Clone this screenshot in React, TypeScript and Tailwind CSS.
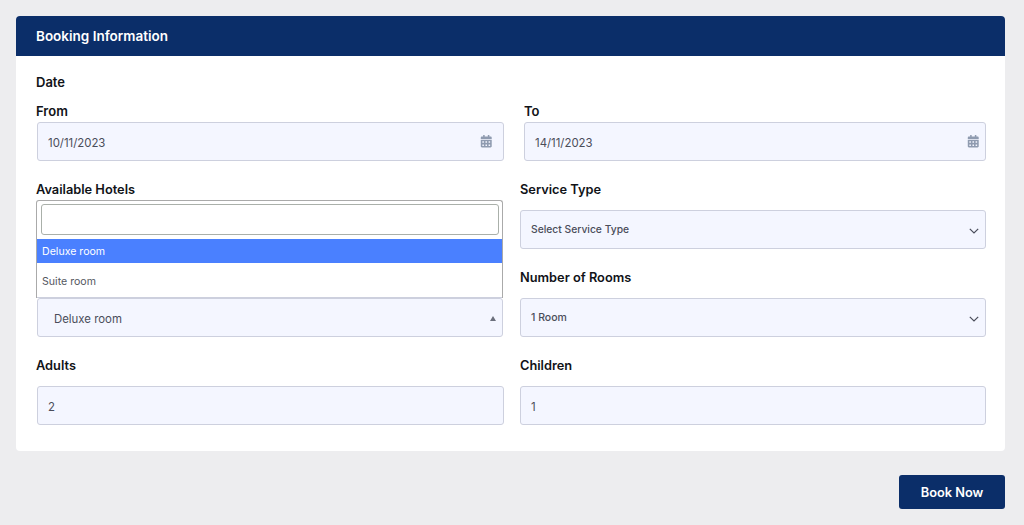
import { FaCalendarAlt } from "react-icons/fa";

function FieldLabel({ children, className = "" }: { children: React.ReactNode; className?: string }) {
  return (
    <label className={`block h-[21px] leading-[23px] font-semibold text-[#111318] ${className}`}>
      {children}
    </label>
  );
}

function Box({ children, className = "" }: { children: React.ReactNode; className?: string }) {
  return (
    <div className={`flex h-[39px] items-center justify-between rounded-[3px] border border-[#cdd0de] bg-[#f4f6ff] pr-[6px] pl-[10px] text-[#4a4d5a] ${className}`}>
      {children}
    </div>
  );
}

function Chevron() {
  return (
    <svg width="10" height="6" viewBox="0 0 10 6" fill="none" stroke="#4a4d5a" strokeWidth="1.2" className="mt-[2px]">
      <path d="M0.8 0.8 5 5 9.2 0.8" />
    </svg>
  );
}

function DateField({ label, value, className, boxClass }: { label: string; value: string; className: string; boxClass: string }) {
  return (
    <div className={className}>
      <FieldLabel className="text-[13px]">{label}</FieldLabel>
      <Box className={`mt-px text-[11.4px] ${boxClass}`}>
        <span className="pt-[4px]">{value}</span>
        <FaCalendarAlt className="text-[12.5px] text-[#8f9bb0]" />
      </Box>
    </div>
  );
}

export default function App() {
  return (
    <div className="h-[525px] w-[1024px] overflow-hidden bg-[#ededef] p-[16px] pr-[19px] font-['Inter',sans-serif]">
      <div className="rounded-[4px] bg-white">
        <div className="flex h-[40px] items-center rounded-t-[4px] bg-[#0b2e69] px-[20px] text-[13.5px] font-semibold text-white">
          Booking Information
        </div>
        <div className="pt-[15px] pr-[19px] pb-[26px] pl-[20px]">
          <FieldLabel className="mb-[8px] text-[13px]">Date</FieldLabel>
          <div className="flex">
            <DateField label="From" value="10/11/2023" className="w-[468px]" boxClass="ml-px pr-[11px]" />
            <DateField label="To" value="14/11/2023" className="ml-[20px] w-[462px]" boxClass="" />
          </div>

          <div className="mt-[17px] grid grid-cols-[468px_466px] gap-x-[16px] gap-y-[17px] text-[12.8px]">
            <div>
              <FieldLabel className="mb-[11px]">Available Hotels</FieldLabel>
              <div className="h-[39px]" />
            </div>
            <div>
              <FieldLabel className="mb-[11px]">Service Type</FieldLabel>
              <Box className="text-[10.5px]">
                <span className="text-[10.3px] font-medium">Select Service Type</span>
                <Chevron />
              </Box>
            </div>

            <div className="relative">
              <div className="h-[32px]" />
              <div className="relative">
                <Box className="mr-px ml-px text-[11.4px]">
                  <span className="pt-[4px] pl-[6px]">Deluxe room</span>
                  <span className="mt-[2px] h-0 w-0 border-x-[3.5px] border-b-[5px] border-x-transparent border-b-[#6b6f7c]" />
                </Box>
                <div className="absolute bottom-full left-0 h-[98px] w-[467px] rounded-t-[3px] border border-b-0 border-[#aaaaaa] bg-white">
                  <div className="pt-[3px] pr-[3px] pb-[4px] pl-[4px]">
                    <div className="h-[31px] rounded-[3px] border border-[#aab0aa] bg-white" />
                  </div>
                  <div className="flex h-[24px] items-center bg-[#4a80ff] pt-[2px] pl-[5px] text-[10.6px] text-white">Deluxe room</div>
                  <div className="flex h-[35px] items-center border-b border-[#cdd0de] pt-[3px] pl-[5px] text-[10.6px] text-[#55585f]">Suite room</div>
                </div>
              </div>
            </div>
            <div>
              <FieldLabel className="mb-[11px]">Number of Rooms</FieldLabel>
              <Box className="text-[10.5px]">
                <span className="font-medium">1 Room</span>
                <Chevron />
              </Box>
            </div>

            <div>
              <FieldLabel className="mb-[11px]">Adults</FieldLabel>
              <Box className="ml-px text-[11.4px]">
                <span className="pt-[5px]">2</span>
              </Box>
            </div>
            <div>
              <FieldLabel className="mb-[11px]">Children</FieldLabel>
              <Box className="text-[11.4px]">
                <span className="pt-[5px]">1</span>
              </Box>
            </div>
          </div>
        </div>
      </div>
      <div className="mt-[24px] flex justify-end">
        <button className="h-[34px] w-[106px] rounded-[3px] bg-[#0b2e69] pt-[2px] text-[12.8px] font-semibold text-white">
          Book Now
        </button>
      </div>
    </div>
  );
}
